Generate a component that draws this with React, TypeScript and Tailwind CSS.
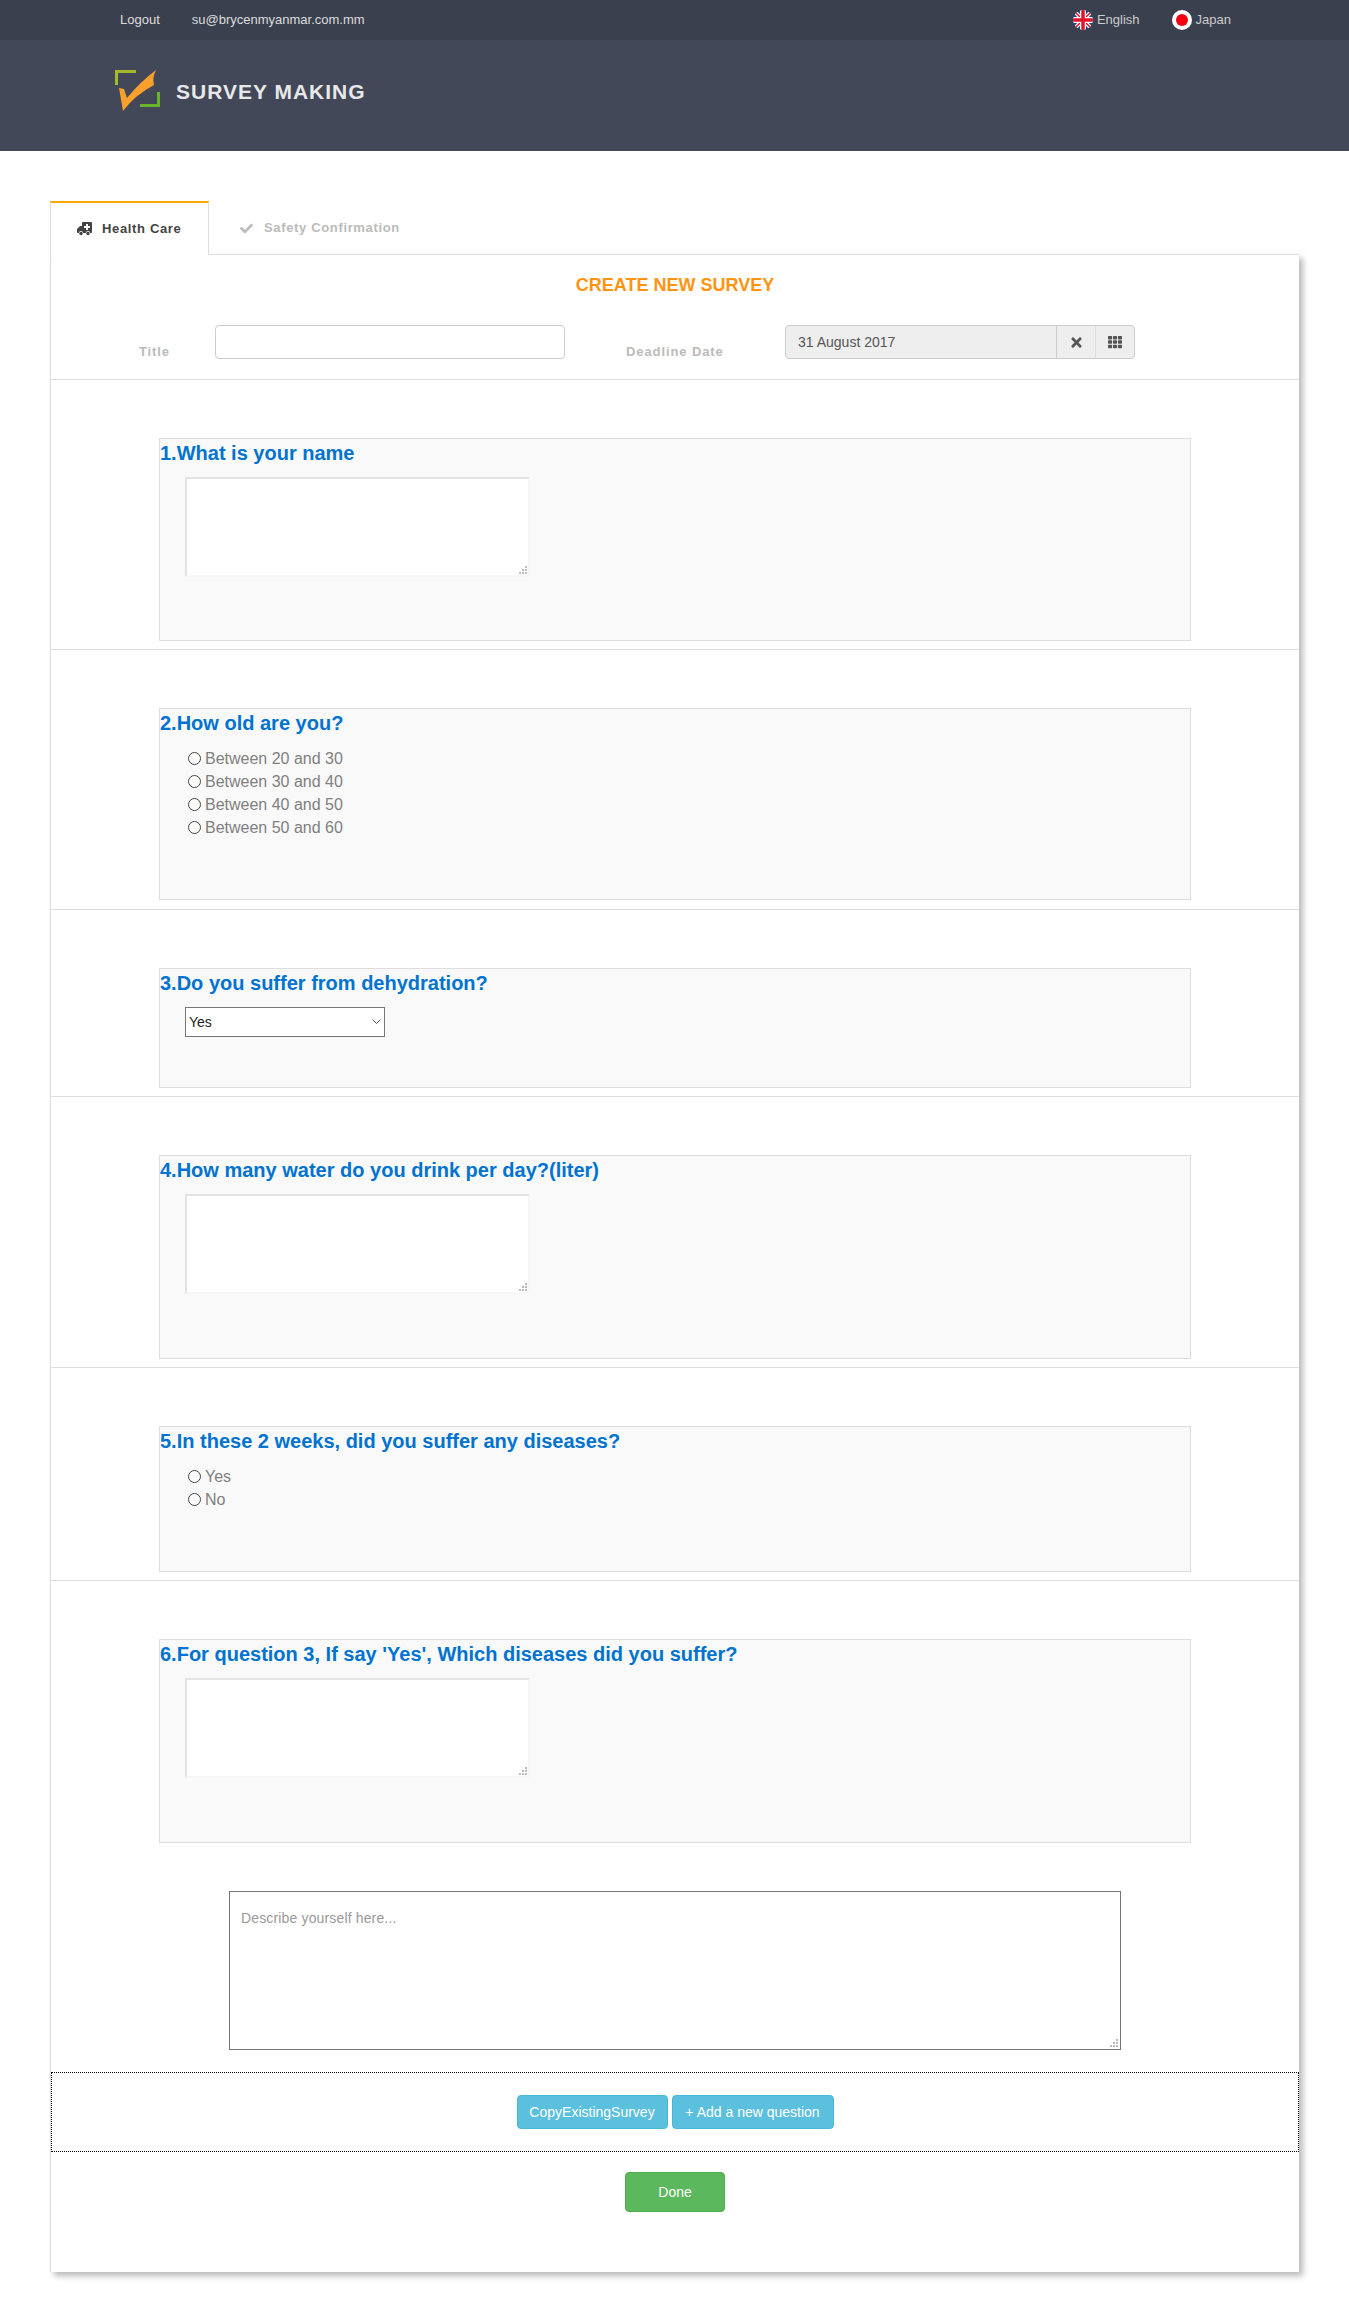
import React from 'react';
import { FaCheck, FaTimes, FaTh } from 'react-icons/fa';

const Logo = () => (
    <svg width="46" height="42" viewBox="115 70 46 42">
        <path d="M116.500 85 V71.500 H136" fill="none" stroke="#a4b82a" strokeWidth="3" />
        <path d="M158.500 92 V105.500 H140" fill="none" stroke="#68b52a" strokeWidth="3" />
        <path d="M119 88 L124 89 L127 98 Q140 82 156 70 Q152 78 154 85 Q135 95 123 111 Z" fill="#f9a02d" />
    </svg>
);

const UkFlag = () => (
    <svg width="20" height="20" viewBox="0 0 20 20">
        <clipPath id="uk"><circle cx="10" cy="10" r="10" /></clipPath>
        <g clipPath="url(#uk)">
            <rect width="20" height="20" fill="#1b4a8a" />
            <path d="M0 0 L20 20 M20 0 L0 20" stroke="#fff" strokeWidth="4" />
            <path d="M0 0 L20 20 M20 0 L0 20" stroke="#e0152b" strokeWidth="1.500" />
            <path d="M10 0 V20 M0 10 H20" stroke="#fff" strokeWidth="6" />
            <path d="M10 0 V20 M0 10 H20" stroke="#e0152b" strokeWidth="3.500" />
        </g>
    </svg>
);

const JapanFlag = () => (
    <svg width="20" height="20" viewBox="0 0 20 20">
        <circle cx="10" cy="10" r="10" fill="#fff" />
        <circle cx="10" cy="10" r="6" fill="#f5000f" />
    </svg>
);

const Ambulance = () => (
    <svg className="mr-[10px]" width="15" height="14" viewBox="0 0 15 14">
        <path d="M5 1 a1 1 0 0 1 1 -1 h8 a1 1 0 0 1 1 1 v9 a1 1 0 0 1 -1 1 h-1 a2 2 0 0 0 -4 0 h-3 a2 2 0 0 0 -4 0 h-1 a1 1 0 0 1 -1 -1 v-3 l3 -3 h2 z" fill="#444" />
        <path d="M9 2 h2 v2 h2 v2 h-2 v2 h-2 v-2 h-2 v-2 h2 z" fill="#fff" />
        <circle cx="4" cy="11.500" r="1.700" fill="#444" />
        <circle cx="11" cy="11.500" r="1.700" fill="#444" />
    </svg>
);

// the dotted corner grip of a textarea
const Grip = () => (
    <svg className="pointer-events-none absolute bottom-[3px] right-[3px]" width="8" height="8" viewBox="0 0 8 8" fill="#bbb">
        <rect x="6" y="0" width="2" height="2" />
        <rect x="3" y="3" width="2" height="2" />
        <rect x="6" y="3" width="2" height="2" />
        <rect x="0" y="6" width="2" height="2" />
        <rect x="3" y="6" width="2" height="2" />
        <rect x="6" y="6" width="2" height="2" />
    </svg>
);

const Question = (props: { title: string; tail?: string; children: React.ReactNode }) => (
    <div className={`border-b border-[#ddd] px-[108px] pt-[58px] ${props.tail ?? 'pb-2'}`}>
        <div className="border border-[#ddd] bg-[#f9f9f9]">
            <h3 className="h-[38px] text-[20px] font-bold leading-[28px] text-[#0073d1]">{props.title}</h3>
            {props.children}
        </div>
    </div>
);

const TextAnswer = (props: { tail?: string }) => (
    <div className={`pl-[25px] ${props.tail ?? 'pb-[64px]'}`}>
        <div className="relative w-[345px]">
            <textarea className="block h-[100px] w-full resize-none border-2 border-[#e3e3e3] border-r-[#f6f6f6] border-b-[#f6f6f6] bg-white" />
            <Grip />
        </div>
    </div>
);

const RadioAnswer = (props: { name: string; options: string[] }) => (
    <div className="pl-[28px] pb-[60px]">
        {props.options.map((option, key) =>
            <label key={key} className="flex h-[23px] items-center text-[16px] text-[#808080]">
                <input type="radio" name={props.name} className="mr-[4px] h-[13px] w-[13px] appearance-none rounded-full border border-[#444] bg-white" />
                {option}
            </label>)}
    </div>
);

export default function App() {
    return (
        <div className="min-h-[2322px] bg-white text-[14px] text-[#333] font-['Liberation_Sans',Arial,sans-serif]">
            <div className="flex h-10 items-center justify-between bg-[#3a404e] pl-[120px] pr-[118px] text-[13px] text-[#ddd]">
                <div className="flex gap-8">
                    <span>Logout</span>
                    <span>su@brycenmyanmar.com.mm</span>
                </div>
                <div className="flex items-center">
                    <UkFlag />
                    <span className="ml-1 mr-8 text-[#ccc]">English</span>
                    <JapanFlag />
                    <span className="ml-1 text-[#ccc]">Japan</span>
                </div>
            </div>
            <div className="flex h-[111px] items-start bg-[#424858] pl-[115px] pt-[30px]">
                <Logo />
                <span className="ml-[15px] mt-[10px] text-[21px] font-bold uppercase leading-[24px] tracking-[1px] text-[#e8e8ea]">survey making</span>
            </div>

            <div className="pl-[50px] pr-[50px] pt-[50px] pb-[50px]">
                <div className="relative z-10 -mb-px flex h-[54px] text-[13px] font-bold tracking-[0.65px]">
                    <div className="flex w-[159px] items-center border-x border-t-2 border-[#ddd] border-t-[#ffa800] bg-white pl-[26px] text-[#444]">
                        <Ambulance />
                        Health Care
                    </div>
                    <div className="flex items-center pl-[31px] text-[#bbb]">
                        <FaCheck className="mr-[11px] text-[13px]" />
                        Safety Confirmation
                    </div>
                </div>

                <div className="h-[2018px] border-l border-t border-[#ddd] bg-white shadow-[4px_4px_6px_#bbb]">
                    <div className="border-b border-[#ddd]">
                        <h2 className="pt-[20px] text-center text-[18px] font-bold leading-5 text-[#ff9312]">CREATE NEW SURVEY</h2>
                        <div className="flex h-[84px] items-start pt-[30px] text-[13px] font-bold tracking-[0.9px] text-[#bbb]">
                            <span className="ml-[88px] mt-[17px] w-[76px]">Title</span>
                            <input className="h-[34px] w-[350px] rounded border border-[#ccc] bg-white" />
                            <span className="ml-[61px] mt-[17px] w-[159px]">Deadline Date</span>
                            <div className="flex h-[34px] w-[350px] rounded border border-[#ccc] bg-[#eee] text-[14px] font-normal tracking-normal text-[#555]">
                                <span className="flex w-[271px] items-center border-r border-[#ccc] pl-3">31 August 2017</span>
                                <span className="flex w-[39px] items-center justify-center border-r border-[#ddd]"><FaTimes className="text-[15px]" /></span>
                                <span className="flex flex-1 items-center justify-center"><FaTh className="text-[14px]" /></span>
                            </div>
                        </div>
                    </div>

                    <Question title="1.What is your name"><TextAnswer tail="pb-[63px]" /></Question>
                    <Question title="2.How old are you?" tail="pb-[9px]">
                        <RadioAnswer name="q2" options={['Between 20 and 30', 'Between 30 and 40', 'Between 40 and 50', 'Between 50 and 60']} />
                    </Question>
                    <Question title="3.Do you suffer from dehydration?">
                        <div className="pl-[25px] pb-[50px]">
                            <div className="relative w-[200px]">
                                <select className="block h-[30px] w-full appearance-none border border-[#767676] bg-white pl-[3px] text-[14px] text-[#222]">
                                    <option>Yes</option>
                                    <option>No</option>
                                </select>
                                <svg className="pointer-events-none absolute right-[4px] top-[12px]" width="9" height="6" viewBox="0 0 9 6" fill="none" stroke="#555" strokeWidth="1">
                                    <path d="M0.500 0.500 L4.500 4.500 L8.500 0.500" />
                                </svg>
                            </div>
                        </div>
                    </Question>
                    <Question title="4.How many water do you drink per day?(liter)"><TextAnswer /></Question>
                    <Question title="5.In these 2 weeks, did you suffer any diseases?">
                        <RadioAnswer name="q5" options={['Yes', 'No']} />
                    </Question>
                    <div className="px-[108px] pt-[58px]">
                        <div className="border border-[#ddd] bg-[#f9f9f9]">
                            <h3 className="h-[38px] text-[20px] font-bold leading-[28px] text-[#0073d1]">6.For question 3, If say 'Yes', Which diseases did you suffer?</h3>
                            <TextAnswer />
                        </div>
                    </div>

                    <div className="pl-[178px] pt-[48px] pb-[22px]">
                        <div className="relative w-[892px]">
                            <textarea
                                className="block h-[159px] w-full resize-none border border-[#767676] bg-white px-[11px] py-[16px] text-[14px] tracking-[0.15px] placeholder:text-[#999]"
                                placeholder="Describe yourself here..." />
                            <Grip />
                        </div>
                    </div>

                    <div className="flex h-[80px] items-center justify-center gap-[4px] border border-dotted border-black text-[14px] text-white">
                        <button className="h-[34px] w-[151px] rounded border border-[#46b8da] bg-[#5bc0de]">CopyExistingSurvey</button>
                        <button className="h-[34px] w-[162px] rounded border border-[#46b8da] bg-[#5bc0de]">+ Add a new question</button>
                    </div>
                    <div className="flex justify-center pt-[20px]">
                        <button className="h-[40px] w-[100px] rounded border border-[#4cae4c] bg-[#5cb85c] text-[14px] text-white">Done</button>
                    </div>
                </div>
            </div>
        </div>
    );
}
